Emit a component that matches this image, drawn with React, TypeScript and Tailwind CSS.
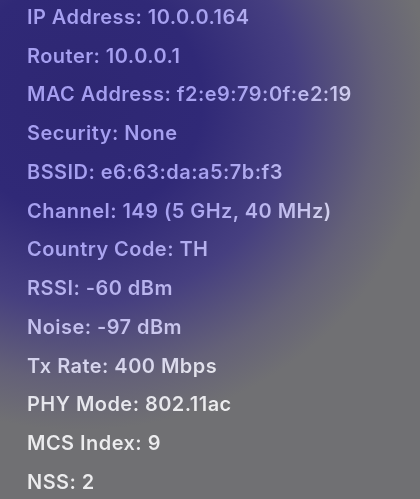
import React from "react";

const rows = [
  "IP Address: 10.0.0.164",
  "Router: 10.0.0.1",
  "MAC Address: f2:e9:79:0f:e2:19",
  "Security: None",
  "BSSID: e6:63:da:a5:7b:f3",
  "Channel: 149 (5 GHz, 40 MHz)",
  "Country Code: TH",
  "RSSI: -60 dBm",
  "Noise: -97 dBm",
  "Tx Rate: 400 Mbps",
  "PHY Mode: 802.11ac",
  "MCS Index: 9",
  "NSS: 2",
];

export default function App() {
  return (
    <div className="w-[420px] h-[499px] overflow-hidden bg-[radial-gradient(ellipse_350px_330px_at_80px_100px,#2e2773_0%,#302977_35%,#463f80_62%,#646178_85%,#707073_100%)]">
      <div
        className="-mt-[2.5px] pl-[27px] flex flex-col bg-[radial-gradient(ellipse_350px_330px_at_80px_100px,#a49df0_0%,#a8a2f0_45%,#c4c0ee_70%,#e4e4ec_90%,#ececee_100%)] bg-clip-text text-transparent font-semibold text-[20px] tracking-[0.45px]"
        style={{ fontFamily: "Inter, 'Noto Sans', sans-serif" }}
      >
        {rows.map((r) => (
          <div key={r} className="h-[38.75px] flex items-center whitespace-nowrap">
            {r}
          </div>
        ))}
      </div>
    </div>
  );
}
